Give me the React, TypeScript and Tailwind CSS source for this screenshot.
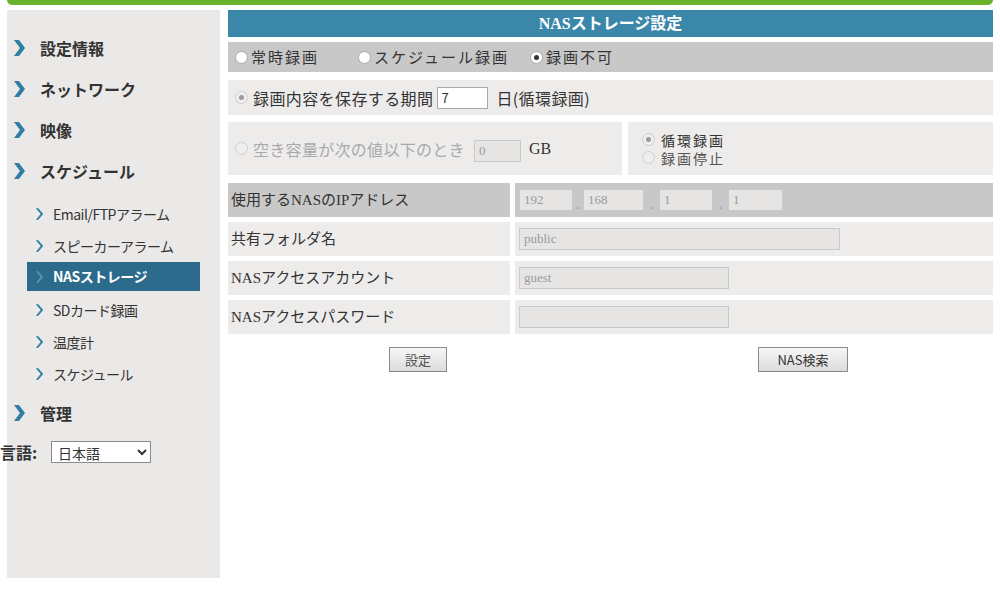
import React from "react";

const jp = "font-['Noto_Sans_CJK_JP',sans-serif]";
const serifJp = "font-['Liberation_Serif','Noto_Sans_CJK_JP',serif]";

const Chevron = ({ small = false, light = false }: { small?: boolean; light?: boolean }) => (
  <svg
    width={small ? 9 : 11}
    height={small ? 14 : 16}
    viewBox="0 0 11 16"
    className="shrink-0"
  >
    <polygon
      points={small ? "1,1 4,1 10,8 4,15 1,15 7,8" : "0,0 5,0 11,8 5,16 0,16 6,8"}
      fill={light ? "#5d93ad" : "#2f7ea6"}
    />
  </svg>
);

const Radio = ({ checked = false, muted = false }: { checked?: boolean; muted?: boolean }) => (
  <span
    className={`inline-flex h-[13px] w-[13px] shrink-0 items-center justify-center rounded-full border ${
      muted ? "border-[#cfcfcf] bg-[#eeeeee]" : "border-[#a9a9a9] bg-white"
    }`}
  >
    {checked && (
      <span className={`h-[5px] w-[5px] rounded-full ${muted ? "bg-[#9a9a9a]" : "bg-[#333]"}`} />
    )}
  </span>
);

const Field = ({ value = "", w }: { value?: string; w: string }) => (
  <input
    readOnly
    value={value}
    className={`${w} h-[22px] border border-[#c9c9c9] bg-[#e6e5e3] px-[4px] text-[13px] text-[#9a9a9a] font-['Liberation_Serif',serif] outline-none`}
  />
);

const mainMenu = ["設定情報", "ネットワーク", "映像", "スケジュール"];
const subMenu = ["Email/FTPアラーム", "スピーカーアラーム", "NASストレージ", "SDカード録画", "温度計", "スケジュール"];

function Sidebar() {
  return (
    <div className={`ml-[7px] h-[568px] w-[213px] bg-[#ebe9e7] ${jp}`}>
      <div className="flex flex-col gap-[19px] pt-[27px] pl-[7px]">
        {mainMenu.map((m) => (
          <div key={m} className="flex h-[22px] items-center gap-[15px]">
            <Chevron />
            <span className="text-[16px] font-bold text-[#333]">{m}</span>
          </div>
        ))}
      </div>
      <div className="mt-[16px] flex flex-col">
        {subMenu.map((s) => {
          const active = s === "NASストレージ";
          return (
            <div
              key={s}
              className={`flex items-center gap-[9px] ${
                active ? "mx-[20px] mb-[3px] h-[29px] bg-[#2d6b8c] pl-[8px]" : "h-[32px] pl-[28px]"
              }`}
            >
              <Chevron small light={active} />
              <span
                className={`text-[14px] tracking-[-0.5px] ${
                  active ? "font-bold text-white" : "text-[#333]"
                }`}
              >
                {s}
              </span>
            </div>
          );
        })}
      </div>
      <div className="mt-[12px] flex h-[22px] items-center gap-[15px] pl-[7px]">
        <Chevron />
        <span className="text-[16px] font-bold text-[#333]">管理</span>
      </div>
      <div className="mt-[16px] ml-[-7px] flex items-center">
        <span className="w-[51px] text-[16px] font-bold text-[#333]">言語:</span>
        <select className="h-[22px] w-[100px] border border-[#8a8a8a] bg-white pl-[2px] text-[14px] text-[#333]">
          <option>日本語</option>
        </select>
      </div>
    </div>
  );
}

function Main() {
  return (
    <div className={`ml-[8px] w-[765px] ${jp} text-[#333]`}>
      <div className="flex h-[27px] items-center justify-center bg-[#3a87aa]">
        <span className={`text-[16px] font-bold text-white ${serifJp}`}>NASストレージ設定</span>
      </div>

      <div className="mt-[5px] flex h-[30px] items-center bg-[#c9c8c8] pl-[7px] text-[15px] tracking-[2px]">
        <div className="flex w-[123px] items-center gap-[3px]">
          <Radio />
          <span>常時録画</span>
        </div>
        <div className="flex w-[172px] items-center gap-[3px]">
          <Radio />
          <span>スケジュール録画</span>
        </div>
        <div className="flex items-center gap-[3px]">
          <Radio checked />
          <span>録画不可</span>
        </div>
      </div>

      <div className="mt-[8px] flex h-[35px] items-center bg-[#eeeceb] pl-[7px] text-[16px] tracking-[0.4px]">
        <Radio checked muted />
        <span className="ml-[5px]">録画内容を保存する期間</span>
        <input
          readOnly
          value="7"
          className="ml-[4px] h-[22px] w-[51px] border border-[#a9a9a9] bg-white px-[3px] text-[13px] outline-none"
        />
        <span className="ml-[8px]">日(循環録画)</span>
      </div>

      <div className="mt-[7px] flex h-[53px] gap-[6px]">
        <div className="flex w-[394px] items-center bg-[#eeeceb] pl-[7px] text-[16px] text-[#a9a9a9]">
          <Radio muted />
          <span className="ml-[5px] tracking-[0.3px]">空き容量が次の値以下のとき</span>
          <span className="ml-[9px]">
            <Field value="0" w="w-[47px]" />
          </span>
          <span className={`ml-[8px] text-[#333] ${serifJp}`}>GB</span>
        </div>
        <div className="flex flex-1 flex-col justify-center bg-[#eeeceb] pl-[14px] text-[14px] leading-[18px] tracking-[2px]">
          <div className="flex items-center gap-[6px]">
            <Radio checked muted />
            <span>循環録画</span>
          </div>
          <div className="flex items-center gap-[6px] text-[#555]">
            <Radio muted />
            <span>録画停止</span>
          </div>
        </div>
      </div>

      <div className="mt-[8px] flex h-[34px] gap-[5px] bg-white">
        <div className={`flex w-[282px] items-center bg-[#c9c8c8] pl-[3px] text-[15px] ${serifJp}`}>
          使用するNASのIPアドレス
        </div>
        <div className="flex flex-1 items-center bg-[#c9c8c8] pl-[4px] text-[#999]">
          <Field value="192" w="w-[54px]" />
          <span className="w-[10px] pt-[8px] text-center text-[12px]">.</span>
          <Field value="168" w="w-[61px]" />
          <span className="w-[15px] pt-[8px] text-center text-[12px]">.</span>
          <Field value="1" w="w-[54px]" />
          <span className="w-[15px] pt-[8px] text-center text-[12px]">.</span>
          <Field value="1" w="w-[55px]" />
        </div>
      </div>

      {[
        { label: "共有フォルダ名", value: "public", w: "w-[321px]" },
        { label: "NASアクセスアカウント", value: "guest", w: "w-[210px]" },
        { label: "NASアクセスパスワード", value: "", w: "w-[210px]" },
      ].map((r) => (
        <div key={r.label} className="mt-[5px] flex h-[34px] gap-[5px]">
          <div className={`flex w-[282px] items-center bg-[#eeeceb] pl-[3px] text-[15px] ${serifJp}`}>
            {r.label}
          </div>
          <div className="flex flex-1 items-center bg-[#eeeceb] pl-[4px]">
            <Field value={r.value} w={r.w} />
          </div>
        </div>
      ))}

      <div className="mt-[13px] flex h-[25px]">
        <div className="flex w-[282px] justify-center">
          <button className="ml-[98px] h-[25px] w-[58px] border border-[#8a8a8a] bg-gradient-to-b from-[#f6f6f6] to-[#dcdcdc] text-[13px] text-[#555]">
            設定
          </button>
        </div>
        <div className="flex flex-1 justify-center">
          <button className="ml-[103px] h-[25px] w-[90px] border border-[#8a8a8a] bg-gradient-to-b from-[#f6f6f6] to-[#dcdcdc] text-[13px] text-[#333]">
            NAS検索
          </button>
        </div>
      </div>
    </div>
  );
}

export default function App() {
  return (
    <div className="h-[601px] w-[1000px] overflow-hidden bg-white">
      <div className="mx-[7px] h-[5px] rounded-b-[6px] bg-[#6bb12b]" />
      <div className="mt-[5px] flex">
        <Sidebar />
        <Main />
      </div>
    </div>
  );
}
